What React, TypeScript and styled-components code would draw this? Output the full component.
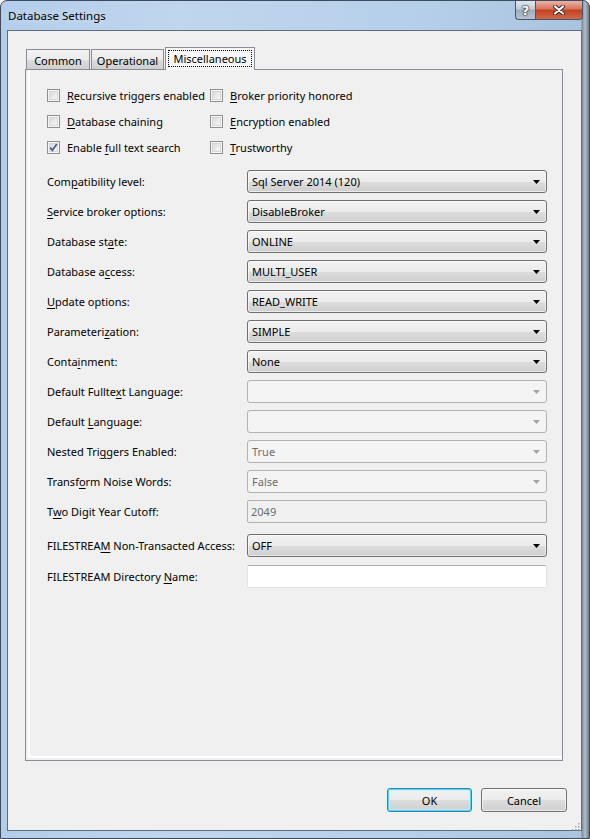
import React from "react";
import styled, { createGlobalStyle, css } from "styled-components";

type FieldKind = "select" | "disabled" | "readonly" | "text";

interface Field {
  label: React.ReactNode;
  kind: FieldKind;
  value: string;
  gap?: number;
}

const GlobalStyle = createGlobalStyle`
  html, body {
    margin: 0;
    padding: 0;
    background: #ffffff;
  }
  body {
    font-family: "Noto Sans", "Open Sans", sans-serif;
    font-size: 11px;
    color: #000000;
  }
`;

const Key = styled.span`
  text-decoration: underline;
  text-underline-offset: 2px;
`;

const checks: { label: React.ReactNode; checked?: boolean }[] = [
  { label: <><Key>R</Key>ecursive triggers enabled</> },
  { label: <><Key>B</Key>roker priority honored</> },
  { label: <><Key>D</Key>atabase chaining</> },
  { label: <><Key>E</Key>ncryption enabled</> },
  { label: <>Enable <Key>f</Key>ull text search</>, checked: true },
  { label: <><Key>T</Key>rustworthy</> },
];

const fields: Field[] = [
  { label: <>Com<Key>p</Key>atibility level:</>, kind: "select", value: "Sql Server 2014 (120)" },
  { label: <><Key>S</Key>ervice broker options:</>, kind: "select", value: "DisableBroker" },
  { label: <>Database st<Key>a</Key>te:</>, kind: "select", value: "ONLINE" },
  { label: <>Database a<Key>c</Key>cess:</>, kind: "select", value: "MULTI_USER" },
  { label: <><Key>U</Key>pdate options:</>, kind: "select", value: "READ_WRITE" },
  { label: <>Parameteri<Key>z</Key>ation:</>, kind: "select", value: "SIMPLE" },
  { label: <>Conta<Key>i</Key>nment:</>, kind: "select", value: "None" },
  { label: <>Default Fullte<Key>x</Key>t Language:</>, kind: "disabled", value: "" },
  { label: <>Default <Key>L</Key>anguage:</>, kind: "disabled", value: "" },
  { label: <>Nested Tri<Key>g</Key>gers Enabled:</>, kind: "disabled", value: "True" },
  { label: <>Transf<Key>o</Key>rm Noise Words:</>, kind: "disabled", value: "False" },
  { label: <>T<Key>w</Key>o Digit Year Cutoff:</>, kind: "readonly", value: "2049" },
  { label: <>FILESTREA<Key>M</Key> Non-Transacted Access:</>, kind: "select", value: "OFF", gap: 11 },
  { label: <>FILESTREAM Directory <Key>N</Key>ame:</>, kind: "text", value: "", gap: 8 },
];

const tabs = [
  { name: "Common", width: 64 },
  { name: "Operational", width: 73 },
  { name: "Miscellaneous", width: 90, active: true },
];

const Arrow = ({ disabled }: { disabled?: boolean }) => (
  <svg width="7" height="4" viewBox="0 0 7 4">
    <polygon points="0,0 7,0 3.5,4" fill={disabled ? "#a3a3a3" : "#000000"} />
  </svg>
);

const CheckMark = () => (
  <svg width="9" height="9" viewBox="0 0 9 9">
    <path d="M1.2 4.6 L3.4 7.2 L7.8 1" fill="none" stroke="#4c5f8c" strokeWidth="1.8" />
  </svg>
);

const CloseGlyph = () => (
  <svg width="12" height="10" viewBox="0 0 12 10">
    <path d="M2 1.5 L10 8.5 M10 1.5 L2 8.5" stroke="#3a2a2a" strokeWidth="4" strokeLinecap="round" />
    <path d="M2 1.5 L10 8.5 M10 1.5 L2 8.5" stroke="#ffffff" strokeWidth="2.2" strokeLinecap="round" />
  </svg>
);

const App = () => {
  return (
    <>
      <GlobalStyle />
      <S_Window>
        <S_TitleBar>
          <S_Title>Database Settings</S_Title>
          <S_Captions>
            <S_CaptionButton $kind="help">
              <S_HelpGlyph>?</S_HelpGlyph>
            </S_CaptionButton>
            <S_CaptionButton $kind="close">
              <CloseGlyph />
            </S_CaptionButton>
          </S_Captions>
        </S_TitleBar>

        <S_Client>
          <S_TabControl>
            <S_TabStrip>
              {tabs.map((tab) => (
                <S_Tab key={tab.name} $width={tab.width} $active={tab.active}>
                  {tab.active ? <S_Focus>{tab.name}</S_Focus> : tab.name}
                </S_Tab>
              ))}
            </S_TabStrip>

            <S_Panel>
              <S_CheckGrid>
                {checks.map((c, i) => (
                  <S_CheckRow key={i}>
                    <S_CheckBox>{c.checked && <CheckMark />}</S_CheckBox>
                    <span>{c.label}</span>
                  </S_CheckRow>
                ))}
              </S_CheckGrid>

              <S_Form>
                {fields.map((f, i) => (
                  <S_FieldRow key={i} $gap={f.gap ?? 7}>
                    <S_Label>{f.label}</S_Label>
                    {f.kind === "select" || f.kind === "disabled" ? (
                      <S_Select $disabled={f.kind === "disabled"}>
                        <span>{f.value}</span>
                        <Arrow disabled={f.kind === "disabled"} />
                      </S_Select>
                    ) : (
                      <S_TextBox $readonly={f.kind === "readonly"}>{f.value}</S_TextBox>
                    )}
                  </S_FieldRow>
                ))}
              </S_Form>
            </S_Panel>
          </S_TabControl>

          <S_ButtonRow>
            <S_Button $default $width={85}>OK</S_Button>
            <S_Button $width={86}>Cancel</S_Button>
          </S_ButtonRow>

          <S_Grip>
            <svg width="10" height="10" viewBox="0 0 10 10">
              {[
                [8, 2], [8, 5], [5, 5], [8, 8], [5, 8], [2, 8],
              ].map(([x, y], i) => (
                <rect key={i} x={x} y={y} width="1.5" height="1.5" fill="#a0a4a8" />
              ))}
            </svg>
          </S_Grip>
        </S_Client>
      </S_Window>
    </>
  );
};

export default App;

const S_Window = styled.div`
  width: 590px;
  height: 839px;
  box-sizing: border-box;
  display: flex;
  flex-direction: column;
  padding: 0 7px 7px 6px;
  border: 1px solid #3d4b5b;
  border-radius: 7px 7px 0 0;
  background:
    linear-gradient(to right, rgba(0, 0, 0, 0) 580px, #7e8b99 581px, #b3bfcb 584px, #5d6976 589px),
    linear-gradient(to right, #b2cdea 0, #c0d6ee 30%, #b6cfea 70%, #a9c2de 100%);
`;

const S_TitleBar = styled.div`
  height: 29px;
  display: flex;
  align-items: flex-start;
  margin-right: -1px;
`;

const S_Title = styled.div`
  margin: 7px 0 0 1px;
  line-height: 16px;
  font-size: 11.5px;
  color: #000000;
  text-shadow: 0 0 8px rgba(255, 255, 255, 0.8);
`;

const S_Captions = styled.div`
  display: flex;
  margin-left: auto;
  margin-top: 0px;
`;

const S_CaptionButton = styled.div<{ $kind: "help" | "close" }>`
  height: 19px;
  box-sizing: border-box;
  display: flex;
  align-items: center;
  justify-content: center;
  border: 1px solid #46566a;
  border-top: none;
  ${({ $kind }) =>
    $kind === "help"
      ? css`
          width: 20px;
          border-right: none;
          border-radius: 0 0 0 4px;
          background: linear-gradient(#dfe6ee 0, #c3ccd7 45%, #9eabba 50%, #b7c3d0 100%);
        `
      : css`
          width: 48px;
          border-radius: 0 0 4px 0;
          background: linear-gradient(#eab5a8 0, #d8725b 45%, #c2401f 50%, #d2694a 100%);
        `}
`;

const S_HelpGlyph = styled.span`
  font-family: "DejaVu Sans", sans-serif;
  font-weight: bold;
  font-size: 13px;
  line-height: 13px;
  color: #ffffff;
  text-shadow: 0 0 1px #2c3440, 0 0 2px #2c3440, 0 0 2px #2c3440;
`;

const S_Client = styled.div`
  position: relative;
  flex: 1;
  display: flex;
  flex-direction: column;
  padding: 16px 14px 0 17px;
  background: #f0f0f0;
  border: 1px solid #5f6c7b;
`;

const S_TabControl = styled.div`
  display: flex;
  flex-direction: column;
  width: 538px;
`;

const S_TabStrip = styled.div`
  display: flex;
  align-items: flex-end;
  height: 22px;
  padding-left: 1px;
`;

const S_Tab = styled.div<{ $width: number; $active?: boolean }>`
  width: ${({ $width }) => $width}px;
  box-sizing: border-box;
  display: flex;
  align-items: center;
  justify-content: center;
  border: 1px solid #898c95;
  border-bottom: none;
  ${({ $active }) =>
    $active
      ? css`
          position: relative;
          z-index: 1;
          height: 23px;
          margin-bottom: -1px;
          padding-bottom: 1px;
          background: #f7f7f7;
        `
      : css`
          height: 20px;
          padding-top: 2px;
          margin-right: 1px;
          background: linear-gradient(#f3f3f3 0, #ebebeb 50%, #dddddd 51%, #cfcfcf 100%);
        `}
`;

const S_Focus = styled.span`
  display: flex;
  align-items: center;
  justify-content: center;
  width: 84px;
  height: 17px;
  box-sizing: border-box;
  border: 1px dotted #000000;
`;

const S_Panel = styled.div`
  height: 692px;
  box-sizing: border-box;
  padding: 19px 0 0 21px;
  border: 1px solid #898c95;
  box-shadow: inset 2px -2px 0 #f0f0f0, inset 4px -4px 0 #ffffff;
`;

const S_CheckGrid = styled.div`
  display: grid;
  grid-template-columns: 163px auto;
  row-gap: 13px;
`;

const S_CheckRow = styled.label`
  display: flex;
  align-items: center;
  gap: 7px;
  height: 13px;
  white-space: nowrap;
`;

const S_CheckBox = styled.span`
  position: relative;
  flex-shrink: 0;
  width: 13px;
  height: 13px;
  box-sizing: border-box;
  display: flex;
  align-items: center;
  justify-content: center;
  border: 1px solid #8e8f8f;
  background: #f4f4f4;
  box-shadow: inset 0 0 0 1px #f7f7f7, inset 0 0 0 2px #d6d6d6;
  background-image: linear-gradient(135deg, #d2d2d2 0, #eeeeee 60%, #fbfbfb 100%);
  svg {
    position: relative;
  }
`;

const S_Form = styled.div`
  display: flex;
  flex-direction: column;
  margin-top: 9px;
`;

const S_FieldRow = styled.div<{ $gap: number }>`
  display: grid;
  grid-template-columns: 200px 300px;
  align-items: center;
  margin-top: ${({ $gap }) => $gap}px;
`;

const S_Label = styled.div`
  white-space: nowrap;
`;

const S_Select = styled.div<{ $disabled?: boolean }>`
  height: 23px;
  box-sizing: border-box;
  display: flex;
  align-items: center;
  justify-content: space-between;
  padding: 0 6px 0 4px;
  border-radius: 3px;
  ${({ $disabled }) =>
    $disabled
      ? css`
          border: 1px solid #adb2b5;
          background: #f4f4f4;
          color: #6d6d6d;
        `
      : css`
          border: 1px solid #707070;
          background: linear-gradient(#f2f2f2 0, #ebebeb 50%, #dddddd 51%, #cfcfcf 100%);
          box-shadow: inset 0 0 0 1px rgba(255, 255, 255, 0.6);
          color: #000000;
        `}
`;

const S_TextBox = styled.div<{ $readonly?: boolean }>`
  height: 23px;
  box-sizing: border-box;
  display: flex;
  align-items: center;
  padding: 0 3px;
  border-radius: 2px;
  ${({ $readonly }) =>
    $readonly
      ? css`
          border: 1px solid #adb2b5;
          background: #f0f0f0;
          color: #6d6d6d;
        `
      : css`
          border: 1px solid #e2e3ea;
          border-top-color: #abadb3;
          background: #ffffff;
        `}
`;

const S_ButtonRow = styled.div`
  display: flex;
  justify-content: flex-end;
  gap: 9px;
  margin-top: 27px;
`;

const S_Button = styled.div<{ $width: number; $default?: boolean }>`
  width: ${({ $width }) => $width}px;
  height: 24px;
  box-sizing: border-box;
  display: flex;
  align-items: center;
  justify-content: center;
  border-radius: 3px;
  background: linear-gradient(#f2f2f2 0, #ebebeb 50%, #dddddd 51%, #cfcfcf 100%);
  ${({ $default }) =>
    $default
      ? css`
          border: 1px solid #3c7fb1;
          box-shadow: inset 0 0 0 1px #48d8fb, inset 0 0 1px 2px rgba(200, 240, 253, 0.7);
        `
      : css`
          border: 1px solid #707070;
          box-shadow: inset 0 0 0 1px rgba(255, 255, 255, 0.6);
        `}
`;

const S_Grip = styled.div`
  position: absolute;
  right: 1px;
  bottom: 1px;
  width: 10px;
  height: 10px;
`;
